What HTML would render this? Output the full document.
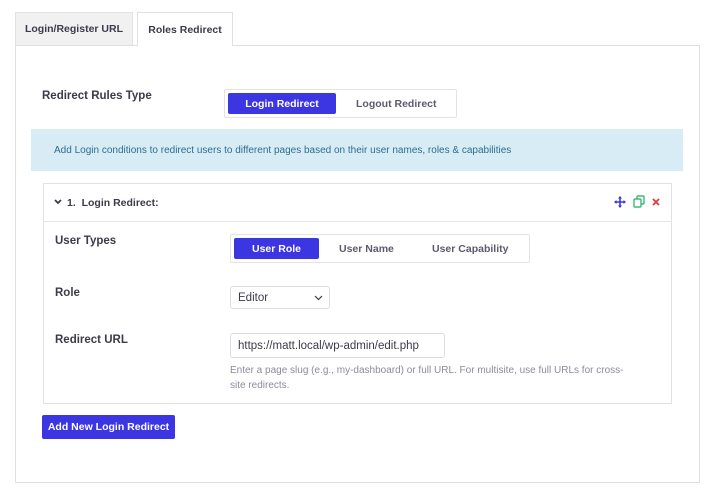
<!DOCTYPE html>
<html><head><meta charset="utf-8"><style>
*{box-sizing:border-box;margin:0;padding:0}
body{width:715px;height:499px;background:#fff;font-family:"Liberation Sans",sans-serif;position:relative;overflow:hidden;color:#3c3b4a}
.a{position:absolute}
.b{font-weight:bold;font-size:11.5px}
.tab{position:absolute;top:12px;height:34px;border:1px solid #e2e2e6;border-bottom:none;font-size:10.5px;font-weight:bold;display:flex;align-items:center;justify-content:center;color:#3c3b4a}
.grp{position:absolute;border:1px solid #e2e2e8;border-radius:2px;background:#fff}
.on{position:absolute;background:#3b35e2;color:#fff;font-weight:bold;font-size:10.5px;display:flex;align-items:center;justify-content:center;border-radius:2px}
.off{position:absolute;color:#5b5a6e;font-weight:bold;font-size:10.5px}
.inp{position:absolute;border:1px solid #dcdce2;border-radius:3px;font-size:11.5px;color:#3c3b4a;padding-left:7px;display:flex;align-items:center;background:#fff}
</style></head><body>
<div class="a" style="left:15px;top:45px;width:685px;height:438px;border:1px solid #e0e0e4"></div>
<div class="tab" style="left:15px;width:118px;background:#f1f1f2;height:33px">Login/Register URL</div>
<div class="tab" style="left:137px;width:96px;background:#fff;height:34px;border-color:#e0e0e4">Roles Redirect</div>
<div class="a b" style="left:42px;top:90px">Redirect Rules Type</div>
<div class="grp" style="left:224px;top:89px;width:233px;height:29px"></div>
<div class="on" style="left:228px;top:93px;width:108px;height:21px">Login Redirect</div>
<div class="off" style="left:356px;top:98px">Logout Redirect</div>
<div class="a" style="left:31px;top:129px;width:652px;height:42px;background:#d8ecf6"></div>
<div class="a" style="left:54px;top:145px;font-size:10px;color:#2e6d8e">Add Login conditions to redirect users to different pages based on their user names, roles &amp; capabilities</div>
<div class="a" style="left:43px;top:183px;width:629px;height:221px;border:1px solid #e2e2e6"></div>
<div class="a" style="left:43px;top:221px;width:629px;height:1px;background:#e6e6ea"></div>
<svg class="a" style="left:54px;top:199px" width="8" height="6"><path d="M1 1L4 4L7 1" stroke="#3c3b4a" stroke-width="1.8" fill="none"/></svg>
<div class="a b" style="left:67px;top:197px;font-size:10.5px">1.&nbsp; Login Redirect:</div>
<svg class="a" style="left:614px;top:196px" width="12" height="12" viewBox="0 0 12 12"><path d="M6 1V11M1 6H11" stroke="#3b35e2" stroke-width="1.6"/><path d="M6 0L4 2.5H8ZM6 12L4 9.5H8ZM0 6L2.5 4V8ZM12 6L9.5 4V8Z" fill="#3b35e2"/></svg>
<svg class="a" style="left:633px;top:195px" width="12" height="13" viewBox="0 0 12 13"><rect x="1" y="4" width="7" height="8" rx="1" fill="none" stroke="#3bb87a" stroke-width="1.4"/><path d="M4 4V2a1 1 0 0 1 1-1h5a1 1 0 0 1 1 1v6a1 1 0 0 1-1 1H8" fill="none" stroke="#3bb87a" stroke-width="1.4"/></svg>
<svg class="a" style="left:652px;top:198px" width="8" height="8"><path d="M1 1L7 7M7 1L1 7" stroke="#e03a3a" stroke-width="1.8"/></svg>
<div class="a b" style="left:55px;top:235px">User Types</div>
<div class="grp" style="left:230px;top:234px;width:300px;height:29px"></div>
<div class="on" style="left:234px;top:238px;width:85px;height:21px">User Role</div>
<div class="off" style="left:339px;top:243px">User Name</div>
<div class="off" style="left:432px;top:243px">User Capability</div>
<div class="a b" style="left:55px;top:287px">Role</div>
<div class="inp" style="left:230px;top:286px;width:100px;height:23px">Editor</div>
<svg class="a" style="left:314px;top:295px" width="9" height="6"><path d="M1 1L4.5 4.5L8 1" stroke="#3c3b4a" stroke-width="1.2" fill="none"/></svg>
<div class="a b" style="left:55px;top:334px">Redirect URL</div>
<div class="inp" style="left:230px;top:333px;width:215px;height:25px">https://matt.local/wp-admin/edit.php</div>
<div class="a" style="left:230px;top:363px;width:440px;font-size:10px;line-height:15px;color:#8c8b9c;white-space:nowrap">Enter a page slug (e.g., my-dashboard) or full URL. For multisite, use full URLs for cross-<br>site redirects.</div>
<div class="on" style="left:42px;top:415px;width:133px;height:24px;font-size:10.5px">Add New Login Redirect</div>
</body></html>
